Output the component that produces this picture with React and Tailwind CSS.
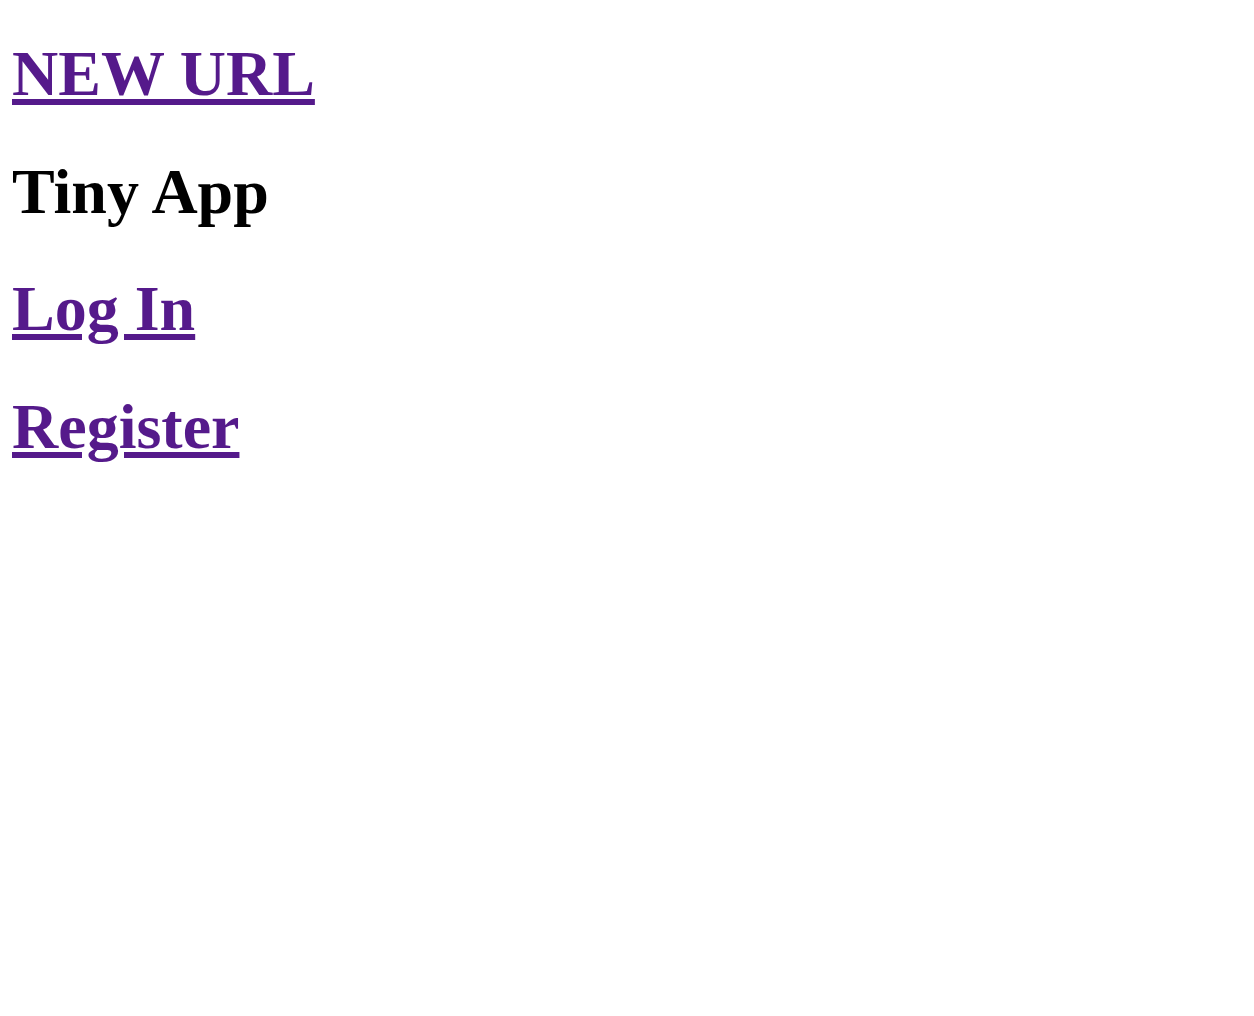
export default function App() {
    return (
        <div className="min-h-screen bg-white px-[12px] pt-[37px] font-['Liberation_Serif',serif]">
            <h1 className="text-[64px] font-bold leading-[1.149] mb-[44px]">
                <a href="#" className="text-[#551a8b] underline">NEW URL</a>
            </h1>
            <h1 className="text-[64px] font-bold leading-[1.149] mb-[44px] text-black">Tiny App</h1>
            <h1 className="text-[64px] font-bold leading-[1.149] mb-[44px]">
                <a href="#" className="text-[#551a8b] underline">Log In</a>
            </h1>
            <h1 className="text-[64px] font-bold leading-[1.149]">
                <a href="#" className="text-[#551a8b] underline">Register</a>
            </h1>
        </div>
    );
}
